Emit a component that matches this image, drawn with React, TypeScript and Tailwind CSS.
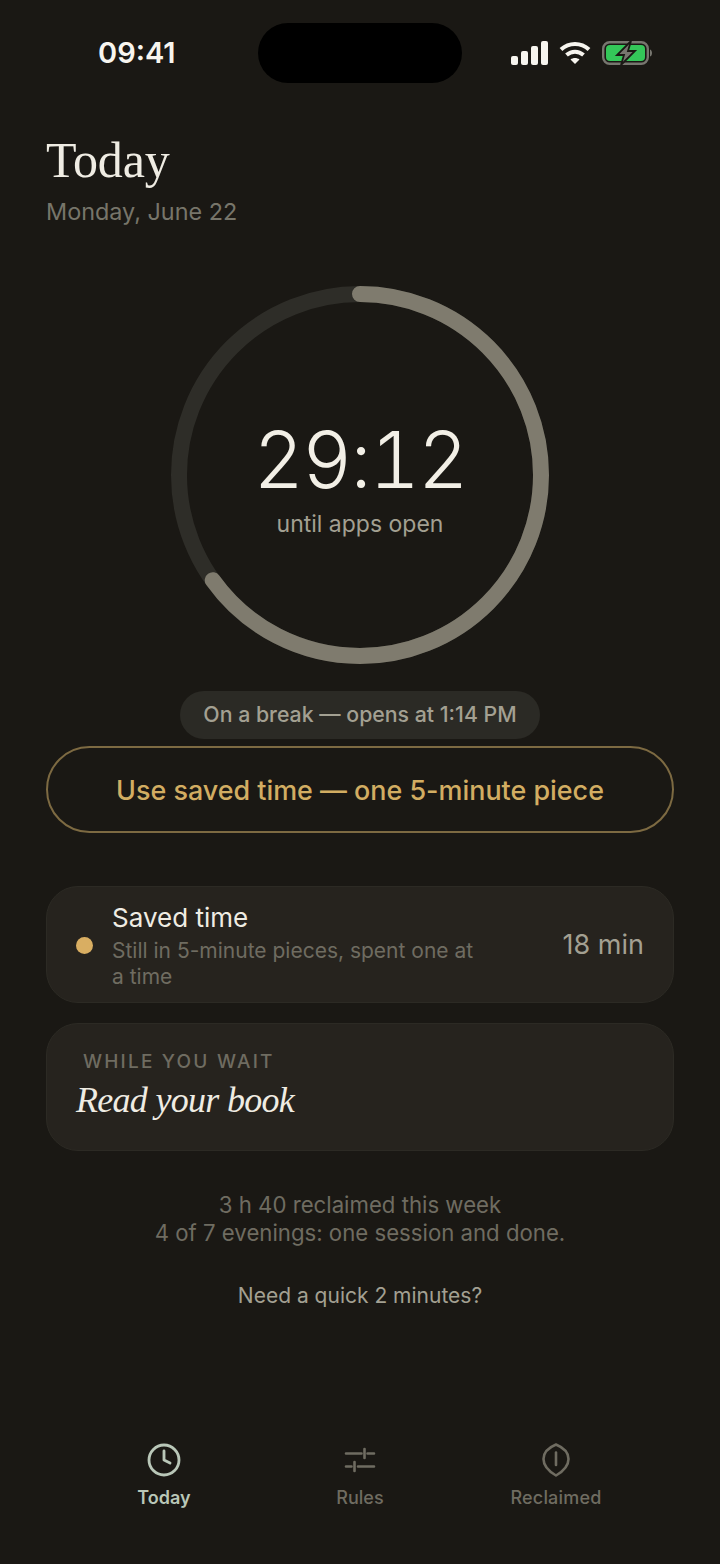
import { Clock } from 'lucide-react';

const sans = 'font-["Inter","Noto_Sans",sans-serif]';

function StatusIcons() {
  return (
    <div className="flex items-center gap-[11px]">
      {/* signal */}
      <svg width="37" height="24" viewBox="0 0 37 24" fill="#f7f5ef">
        <rect x="0" y="15" width="7" height="9" rx="2" />
        <rect x="10" y="10" width="7" height="14" rx="2" />
        <rect x="20" y="5" width="7" height="19" rx="2" />
        <rect x="30" y="0" width="7" height="24" rx="2" />
      </svg>
      {/* wifi */}
      <svg width="32" height="24" viewBox="0 0 32 24" fill="none" stroke="#f7f5ef" strokeWidth="4">
        <path d="M2 8.5 C10 1 22 1 30 8.5" />
        <path d="M7.5 14 C12.5 9.5 19.5 9.5 24.5 14" />
        <path d="M16 23 L11.5 18.5 C14 16.5 18 16.5 20.5 18.5 Z" fill="#f7f5ef" stroke="none" />
      </svg>
      {/* battery */}
      <svg width="50" height="24" viewBox="0 0 50 24">
        <rect x="1.2" y="1.2" width="44.6" height="21.6" rx="6.5" fill="none" stroke="#77766f" strokeWidth="2.4" />
        <rect x="4" y="4" width="39" height="16" rx="4" fill="#34c759" />
        <path d="M48 8.5 C49.5 9 50 10.5 50 12 C50 13.5 49.5 15 48 15.5 Z" fill="#77766f" />
        <path d="M29 0 L15 14 L22 14 L19 24 L33 10 L26 10 Z" fill="#77766f" stroke="#1a1814" strokeWidth="1.8" />
      </svg>
    </div>
  );
}

function Ring() {
  const r = 181;
  const c = 2 * Math.PI * r;
  return (
    <svg width="378" height="378" viewBox="0 0 378 378" className="-rotate-90">
      <circle cx="189" cy="189" r={r} fill="none" stroke="#2e2d28" strokeWidth="16" />
      <circle
        cx="189"
        cy="189"
        r={r}
        fill="none"
        stroke="#7f7b6e"
        strokeWidth="16"
        strokeLinecap="round"
        strokeDasharray={`${c * 0.651} ${c}`}
      />
    </svg>
  );
}

const RulesIcon = () => (
  <svg width="36" height="36" viewBox="0 0 36 36" fill="none" stroke="#6f6c61" strokeWidth="2.6" strokeLinecap="round">
    <path d="M4 11.5H19.5M25.5 11.5H32" />
    <path d="M22.5 7V16" />
    <path d="M4 24.5H9.5M16 24.5H32" />
    <path d="M12.5 20V29" />
  </svg>
);

const ReclaimedIcon = () => (
  <svg width="36" height="36" viewBox="0 0 36 36" fill="none" stroke="#6f6c61" strokeWidth="2.6" strokeLinecap="round" strokeLinejoin="round">
    <path d="M18 2.5C24 5 30.5 9.5 30.5 17C30.5 24.5 24 30 18 33.5C12 30 5.5 24.5 5.5 17C5.5 9.5 12 5 18 2.5Z" />
    <path d="M18 10.5V23" />
  </svg>
);

export default function App() {
  return (
    <div className={`${sans} w-[720px] h-[1564px] bg-[#1a1814] flex flex-col overflow-hidden`}>
      {/* Status bar */}
      <div className="grid grid-cols-[258px_204px_258px] pt-[23px] items-center">
        <div className="pl-[98px] text-[29px] leading-[36px] font-semibold text-[#f7f5ef]">09:41</div>
        <div className="h-[60px] rounded-[30px] bg-black" />
        <div className="pl-[49px]">
          <StatusIcons />
        </div>
      </div>

      {/* Heading */}
      <div className="px-[46px] mt-[47px]">
        <h1 className="font-['Liberation_Serif',serif] text-[50px] leading-[60px] text-[#efece3] tracking-[-0.1px]">Today</h1>
        <p className="text-[23.4px] leading-[32px] mt-[6px] text-[#77756a]">Monday, June 22</p>
      </div>

      {/* Timer */}
      <div className="mt-[58px] flex justify-center">
        <div className="relative w-[378px] h-[378px]">
          <Ring />
          <div className="absolute inset-0 flex flex-col items-center pt-[130px]">
            <div className="text-[78px] leading-[88px] font-[280] tabular-nums tracking-[-2px] text-[#f2efe6]">29:12</div>
            <div className="text-[23px] leading-[28px] mt-[6px] text-[#a3a092]">until apps open</div>
          </div>
        </div>
      </div>

      {/* Break pill */}
      <div className="mt-[27px] flex justify-center">
        <div className="h-[48px] px-[23px] rounded-full bg-[#2b2a25] flex items-center text-[21.3px] font-medium text-[#a3a092]">
          On a break — opens at 1:14 PM
        </div>
      </div>

      {/* Use saved time */}
      <div className="mt-[7px] mx-[46px] h-[87px] pt-[1px] rounded-full border-2 border-[#7d6a42] flex items-center justify-center text-[26.9px] font-medium text-[#d2ad62]">
        Use saved time — one 5-minute piece
      </div>

      {/* Cards */}
      <div className="mt-[53px] mx-[46px] h-[117px] pt-[2px] rounded-[32px] bg-[#26231e] border border-[#2c2a24] flex items-center pl-[29px] pr-[29px]">
        <div className="w-[17px] h-[17px] rounded-full bg-[#d9ae62] shrink-0" />
        <div className="ml-[19px] w-[370px]">
          <div className="text-[26px] leading-[34px] text-[#efece3]">Saved time</div>
          <div className="mt-[3px] text-[21px] leading-[26px] text-[#6f6c61]">Still in 5-minute pieces, spent one at a time</div>
        </div>
        <div className="ml-auto text-[27px] text-[#a3a092]">18 min</div>
      </div>

      <div className="mt-[20px] mx-[46px] h-[128px] rounded-[32px] bg-[#26231e] border border-[#2c2a24] pl-[29px] pt-[25px]">
        <div className="pl-[7px] text-[19px] leading-[26px] font-medium tracking-[2.2px] text-[#6f6c61]">WHILE YOU WAIT</div>
        <div className="mt-[2px] font-['Liberation_Serif',serif] italic text-[36px] leading-[46px] tracking-[-0.7px] text-[#efece3]">Read your book</div>
      </div>

      {/* Weekly note */}
      <div className="mt-[40px] text-center text-[22.2px] leading-[28px] text-[#6f6c61]">
        <div>3 h 40 reclaimed this week</div>
        <div>4 of 7 evenings: one session and done.</div>
      </div>

      <div className="mt-[35px] text-center text-[21px] leading-[28px] text-[#a3a092]">Need a quick 2 minutes?</div>

      {/* Tabs */}
      <div className="mt-auto mb-[54px] px-[66px] grid grid-cols-3">
        <div className="flex flex-col items-center">
          <Clock size={36} strokeWidth={1.9} color="#b9c7b8" />
          <span className="mt-[8px] text-[18px] leading-[24px] font-semibold text-[#b9c7b8]">Today</span>
        </div>
        <div className="flex flex-col items-center">
          <RulesIcon />
          <span className="mt-[8px] text-[18px] leading-[24px] font-medium text-[#6f6c61]">Rules</span>
        </div>
        <div className="flex flex-col items-center">
          <ReclaimedIcon />
          <span className="mt-[8px] text-[18px] leading-[24px] font-medium tracking-[0.2px] text-[#6f6c61]">Reclaimed</span>
        </div>
      </div>
    </div>
  );
}
